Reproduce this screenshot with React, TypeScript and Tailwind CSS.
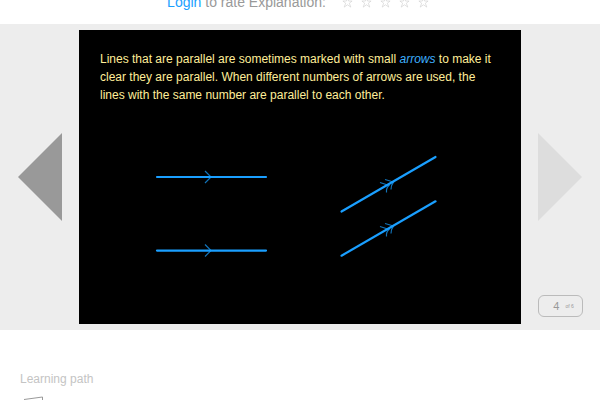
const STARS = [1, 2, 3, 4, 5];

function Header() {
  return (
    <header className="flex h-6 items-end justify-center overflow-hidden pb-3 text-sm leading-5 text-[#999]">
      <p>
        <a href="#login" className="text-[#1a9fff]">Login</a> to rate Explanation:
      </p>
      <div className="ml-3 flex" role="group" aria-label="Rating">
        {STARS.map((n) => (
          <button key={n} type="button" aria-label={`${n} stars`} className="flex h-5 w-[19px] items-center justify-center">
            <svg viewBox="0 0 12 12" className="h-[11px] w-[11px]" fill="none" stroke="#d0d0d0" strokeWidth="0.7">
              <path d="M6 .8 7.2 4.4H11L8 6.800 9.600 11 6 8.500 2.400 11 4 6.800 1 4.400H4.800Z" />
            </svg>
          </button>
        ))}
      </div>
    </header>
  );
}

function ParallelLines() {
  return (
    <svg viewBox="0 0 300 120" className="mx-auto mt-[42px] block h-[120px] w-[300px]" fill="none" role="img" aria-label="Two pairs of parallel lines marked with arrows">
      <g stroke="#1273b8" strokeWidth="1.2">
        <path d="M55 25 61 31 55 37" />
        <path d="M55 98.5 61 104.5 55 110.5" />
        <path d="M230 36.5 239 39.5Q236 42 236.500 46.500M235 33.500 243.500 36Q241 39 241 43.500" />
        <path d="M230 80.500 239 83.500Q236 86 236.500 90.500M235 77.500 243.500 80Q241 83 241 87.500" />
      </g>
      <g stroke="#1a9fff" strokeWidth="2.2" strokeLinecap="round">
        <path d="M7 31H116" />
        <path d="M7 104.6H116" />
        <path d="M191.5 65.500 285.500 11" />
        <path d="M191.5 109.700 285.500 55.300" />
      </g>
    </svg>
  );
}

function Slide() {
  return (
    <article className="min-w-0 flex-1 bg-black px-[21px] pt-5 pb-[58px] text-xs leading-[18px] text-[#ffee99]">
      <p>
        Lines that are parallel are sometimes marked with small <em className="text-[#3fb0ff]">arrows</em> to make it clear they are parallel. When different numbers of arrows are used, the lines with the same number are parallel to each other.
      </p>
      <ParallelLines />
    </article>
  );
}

export default function App() {
  return (
    <div className="min-h-screen bg-white font-['Liberation_Sans',Arial,sans-serif]">
      <Header />
      <main className="flex bg-[#ededed] py-1.5">
        <div className="flex w-[79px] shrink-0 items-center pl-[18px]">
          <button type="button" aria-label="Previous">
            <svg viewBox="0 0 44 88" className="block h-[88px] w-11" fill="#999">
              <path d="M44 0V88L0 44Z" />
            </svg>
          </button>
        </div>
        <Slide />
        <div className="relative flex w-[79px] shrink-0 items-center pl-[17px]">
          <button type="button" aria-label="Next">
            <svg viewBox="0 0 44 88" className="block h-[88px] w-11" fill="#ddd">
              <path d="M0 0V88L44 44Z" />
            </svg>
          </button>
          <div className="absolute bottom-[7px] left-[17px] flex h-[22px] w-[45px] items-center justify-center gap-1.5 rounded-md border border-[#bbb] pl-1.5 text-[#999]">
            <span className="text-[11px] leading-5">4</span>
            <span className="text-[5px] leading-5">of 6</span>
          </div>
        </div>
      </main>
      <section className="h-[70px] overflow-hidden px-5 pt-10">
        <h2 className="text-xs leading-[18px] text-[#c4c4c4]">Learning path</h2>
        <svg viewBox="0 0 24 24" className="ml-1 mt-2 h-6 w-6" fill="none" stroke="#999" strokeWidth="1">
          <path d="M0 3.500 18.500 1V22L0 20Z" />
        </svg>
      </section>
    </div>
  );
}
